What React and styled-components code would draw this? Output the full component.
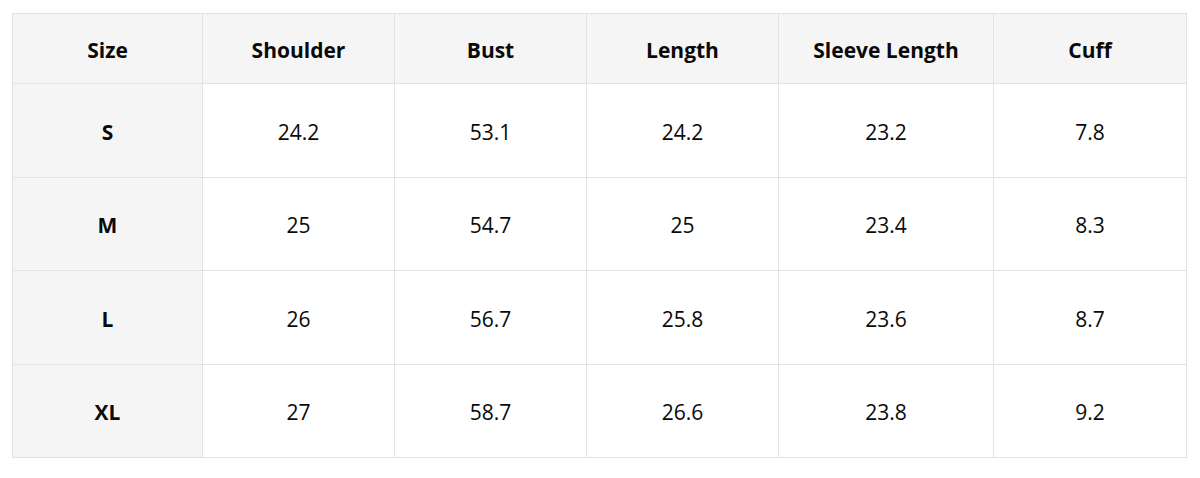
import React from "react";
import styled, { createGlobalStyle } from "styled-components";

const GlobalStyle = createGlobalStyle`
  body {
    margin: 0;
    background: #fff;
    font-family: "Open Sans", "Noto Sans", sans-serif;
    color: #0a0a0a;
  }
`;

const Wrap = styled.div`
  padding: 13px 14px 0 12px;
`;

const Table = styled.table`
  width: 1174px;
  border-collapse: collapse;
  table-layout: fixed;
`;

const Cell = styled.td`
  border: 1px solid #e2e2e2;
  text-align: center;
  vertical-align: middle;
  font-size: 21px;
  font-weight: ${(p) => (p.$bold ? 700 : 400)};
  background: ${(p) => (p.$shade ? "#f5f5f5" : "#fff")};
  height: ${(p) => (p.$head ? "65px" : "88.5px")};
  padding: 4px 0 0;
  line-height: 1;
`;

const widths = [190, 192, 192, 192, 215, 193];

const head = ["Size", "Shoulder", "Bust", "Length", "Sleeve Length", "Cuff"];

const rows = [
  ["S", "24.2", "53.1", "24.2", "23.2", "7.8"],
  ["M", "25", "54.7", "25", "23.4", "8.3"],
  ["L", "26", "56.7", "25.8", "23.6", "8.7"],
  ["XL", "27", "58.7", "26.6", "23.8", "9.2"],
];

export default function App() {
  return (
    <>
      <GlobalStyle />
      <Wrap>
        <Table>
          <colgroup>
            {widths.map((w, i) => (
              <col key={i} style={{ width: w }} />
            ))}
          </colgroup>
          <thead>
            <tr>
              {head.map((h) => (
                <Cell as="th" key={h} $head $bold $shade>
                  {h}
                </Cell>
              ))}
            </tr>
          </thead>
          <tbody>
            {rows.map((r) => (
              <tr key={r[0]}>
                {r.map((v, i) => (
                  <Cell key={i} $bold={i === 0} $shade={i === 0}>
                    {v}
                  </Cell>
                ))}
              </tr>
            ))}
          </tbody>
        </Table>
      </Wrap>
    </>
  );
}
